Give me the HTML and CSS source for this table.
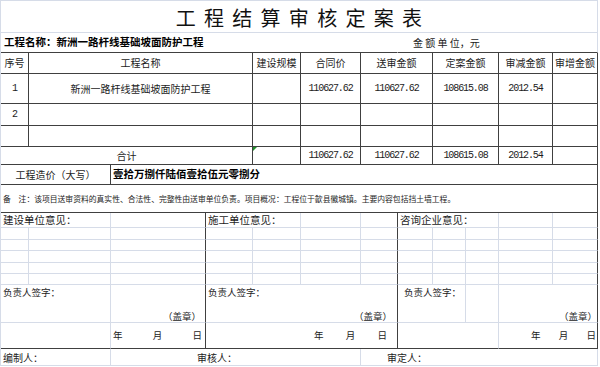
FILE: index.html
```html
<!DOCTYPE html>
<html lang="zh-CN">
<head>
<meta charset="utf-8">
<title>工程结算审核定案表</title>
<link rel="stylesheet" href="styles.css">
</head>
<body>
<div class="sheet">
  <!-- title -->
  <div class="c s12 title">工程结算审核定案表</div>
  <!-- project name row -->
  <div class="c s7 start nr db pname">工程名称：新洲一路杆线基础坡面防护工程</div>
  <div class="c s5 start db unit">金 额 单 位，元</div>

  <!-- header -->
  <div class="c t">序号</div>
  <div class="c t s3">工程名称</div>
  <div class="c t">建设规模</div>
  <div class="c t">合同价</div>
  <div class="c t s2">送审金额</div>
  <div class="c t s2">定案金额</div>
  <div class="c t">审减金额</div>
  <div class="c t">审增金额</div>

  <!-- row 1 -->
  <div class="c t n">1</div>
  <div class="c t s3">新洲一路杆线基础坡面防护工程</div>
  <div class="c t"></div>
  <div class="c t n">110627.62</div>
  <div class="c t s2 n">110627.62</div>
  <div class="c t s2 n">108615.08</div>
  <div class="c t n">2012.54</div>
  <div class="c t"></div>

  <!-- row 2 -->
  <div class="c t n">2</div>
  <div class="c t s3"></div>
  <div class="c t"></div>
  <div class="c t"></div>
  <div class="c t s2"></div>
  <div class="c t s2"></div>
  <div class="c t"></div>
  <div class="c t"></div>

  <!-- row 3 -->
  <div class="c t"></div>
  <div class="c t s3"></div>
  <div class="c t"></div>
  <div class="c t"></div>
  <div class="c t s2"></div>
  <div class="c t s2"></div>
  <div class="c t"></div>
  <div class="c t"></div>

  <!-- total -->
  <div class="c t s4">合计</div>
  <div class="c t tri"></div>
  <div class="c t n">110627.62</div>
  <div class="c t s2 n">110627.62</div>
  <div class="c t s2 n">108615.08</div>
  <div class="c t n">2012.54</div>
  <div class="c t"></div>

  <!-- amount in words -->
  <div class="c t s2">工程造价（大写）</div>
  <div class="c t s10 start words">壹拾万捌仟陆佰壹拾伍元零捌分</div>

  <!-- remark -->
  <div class="c t s12 start remark">备　注：该项目送审资料的真实性、合法性、完整性由送审单位负责。项目概况：工程位于歙县徽城镇。主要内容包括挡土墙工程。</div>

  <!-- opinion labels -->
  <div class="c s2 start label">建设单位意见：</div>
  <div class="c dr"></div>
  <div class="c s2 start label">施工单位意见：</div>
  <div class="c"></div>
  <div class="c dr"></div>
  <div class="c s3 start label">咨询企业意见：</div>
  <div class="c"></div>
  <div class="c dr"></div>

  <!-- grid rows x5 -->
  <div class="c"></div><div class="c"></div><div class="c dr"></div><div class="c"></div><div class="c"></div><div class="c"></div><div class="c dr"></div><div class="c"></div><div class="c"></div><div class="c"></div><div class="c"></div><div class="c dr"></div>
  <div class="c"></div><div class="c"></div><div class="c dr"></div><div class="c"></div><div class="c"></div><div class="c"></div><div class="c dr"></div><div class="c"></div><div class="c"></div><div class="c"></div><div class="c"></div><div class="c dr"></div>
  <div class="c"></div><div class="c"></div><div class="c dr"></div><div class="c"></div><div class="c"></div><div class="c"></div><div class="c dr"></div><div class="c"></div><div class="c"></div><div class="c"></div><div class="c"></div><div class="c dr"></div>
  <div class="c"></div><div class="c"></div><div class="c dr"></div><div class="c"></div><div class="c"></div><div class="c"></div><div class="c dr"></div><div class="c"></div><div class="c"></div><div class="c"></div><div class="c"></div><div class="c dr"></div>
  <div class="c"></div><div class="c"></div><div class="c dr"></div><div class="c"></div><div class="c"></div><div class="c"></div><div class="c dr"></div><div class="c"></div><div class="c"></div><div class="c"></div><div class="c"></div><div class="c dr"></div>

  <!-- signature row -->
  <div class="c s2 sig">负责人签字：</div>
  <div class="c dr seal">（盖章）</div>
  <div class="c s4 dr sigseal"><span class="sigt">负责人签字：</span><span class="sealt">（盖章）</span></div>
  <div class="c s2 sig sig3">负责人签字：</div>
  <div class="c"></div>
  <div class="c s2 dr seal seal3">（盖章）</div>

  <!-- date row -->
  <div class="c s2 db"></div>
  <div class="c dr db ymd ymd1"><span>年</span><span>月</span><span>日</span></div>
  <div class="c s4 dr db ymd ymd2"><span>年</span><span>月</span><span>日</span></div>
  <div class="c s3 db"></div>
  <div class="c s2 dr db ymd ymd3"><span>年</span><span>月</span><span>日</span></div>

  <!-- footer -->
  <div class="c s2 start foot">编制人：</div>
  <div class="c s4 start foot foot2">审核人：</div>
  <div class="c s6 start foot foot3">审定人：</div>
</div>
</body>
</html>
```

FILE: styles.css
```css
* { box-sizing: border-box; }

:root {
  --g: #d6dce8;
  --d: #404040;
}

body {
  margin: 0;
  background: #ffffff;
  font-family: "Noto Sans CJK SC", "Noto Sans", sans-serif;
  color: #1c1c1c;
}

.sheet {
  display: grid;
  width: 598px;
  grid-template-columns: 28px 82px 95px 47px 48px 60px 37px 35px 33px 33px 54px 45px;
  grid-template-rows: 32px 20px 21px 30px 22px 21px 18px 20px 28px 15px 12px 11px 12px 11px 11px 38px 26px 17px;
  border-top: 1px solid var(--g);
  border-left: 1px solid var(--g);
}

.c {
  position: relative;
  display: flex;
  align-items: center;
  justify-content: center;
  white-space: nowrap;
  min-width: 0;
  font-size: 10px;
  line-height: 1;
  border-right: 1px solid var(--g);
  border-bottom: 1px solid var(--g);
}

.s2 { grid-column: span 2; }
.s3 { grid-column: span 3; }
.s4 { grid-column: span 4; }
.s5 { grid-column: span 5; }
.s6 { grid-column: span 6; }
.s7 { grid-column: span 7; }
.s10 { grid-column: span 10; }
.s12 { grid-column: span 12; }

.start { justify-content: flex-start; padding-left: 2px; }

.t { border-right-color: var(--d); border-bottom-color: var(--d); }
.dr { border-right-color: var(--d); }
.db { border-bottom-color: var(--d); }
.nr { border-right-color: transparent; }

.title {
  font-size: 20px;
  letter-spacing: 8.3px;
  padding-left: 8px;
  color: #111;
  padding-top: 2px;
}

.pname {
  font-weight: 700;
  font-size: 10.5px;
  color: #000;
  padding-left: 3px;
}

.unit {
  padding-left: 15px;
  font-size: 10px;
  letter-spacing: 0;
  white-space: pre;
  padding-top: 1px;
}

.n {
  font-family: "Liberation Mono", "DejaVu Sans Mono", monospace;
  font-size: 10px;
  letter-spacing: -1.1px;
  color: #1c1c1c;
}

.tri::before {
  content: "";
  position: absolute;
  left: 0;
  top: 0;
  border-top: 4px solid #1f8f2a;
  border-right: 4px solid transparent;
}

.words {
  font-weight: 700;
  font-size: 10.5px;
  color: #000;
  padding-left: 2px;
}

.remark {
  font-size: 7.8px;
  padding-left: 2px;
}

.label {
  font-size: 10.5px;
  padding-top: 1px;
}

.sig {
  align-items: flex-start;
  justify-content: flex-start;
  padding: 3px 0 0 2px;
  font-size: 9.5px;
}

.sig3 { padding-left: 6px; }

.seal {
  align-items: flex-end;
  justify-content: flex-end;
  padding: 0 4px 1px 0;
  font-size: 9.5px;
}

.seal3 { padding-right: 0; }

.sigseal {
  flex-direction: column;
  align-items: stretch;
  justify-content: space-between;
  padding: 3px 5px 1px 2px;
  font-size: 9.5px;
}

.sigt { align-self: flex-start; }
.sealt { align-self: flex-end; }

.ymd {
  justify-content: space-between;
  font-size: 9.5px;
}

.ymd1 { padding: 0 3px 0 2px; }
.ymd2 { padding: 0 10px 0 108px; }
.ymd3 { padding: 0 1px 0 32px; }

.foot {
  font-size: 10px;
  padding-top: 2px;
}

.foot2 { padding-left: 86px; }
.foot3 { padding-left: 26px; }
```
